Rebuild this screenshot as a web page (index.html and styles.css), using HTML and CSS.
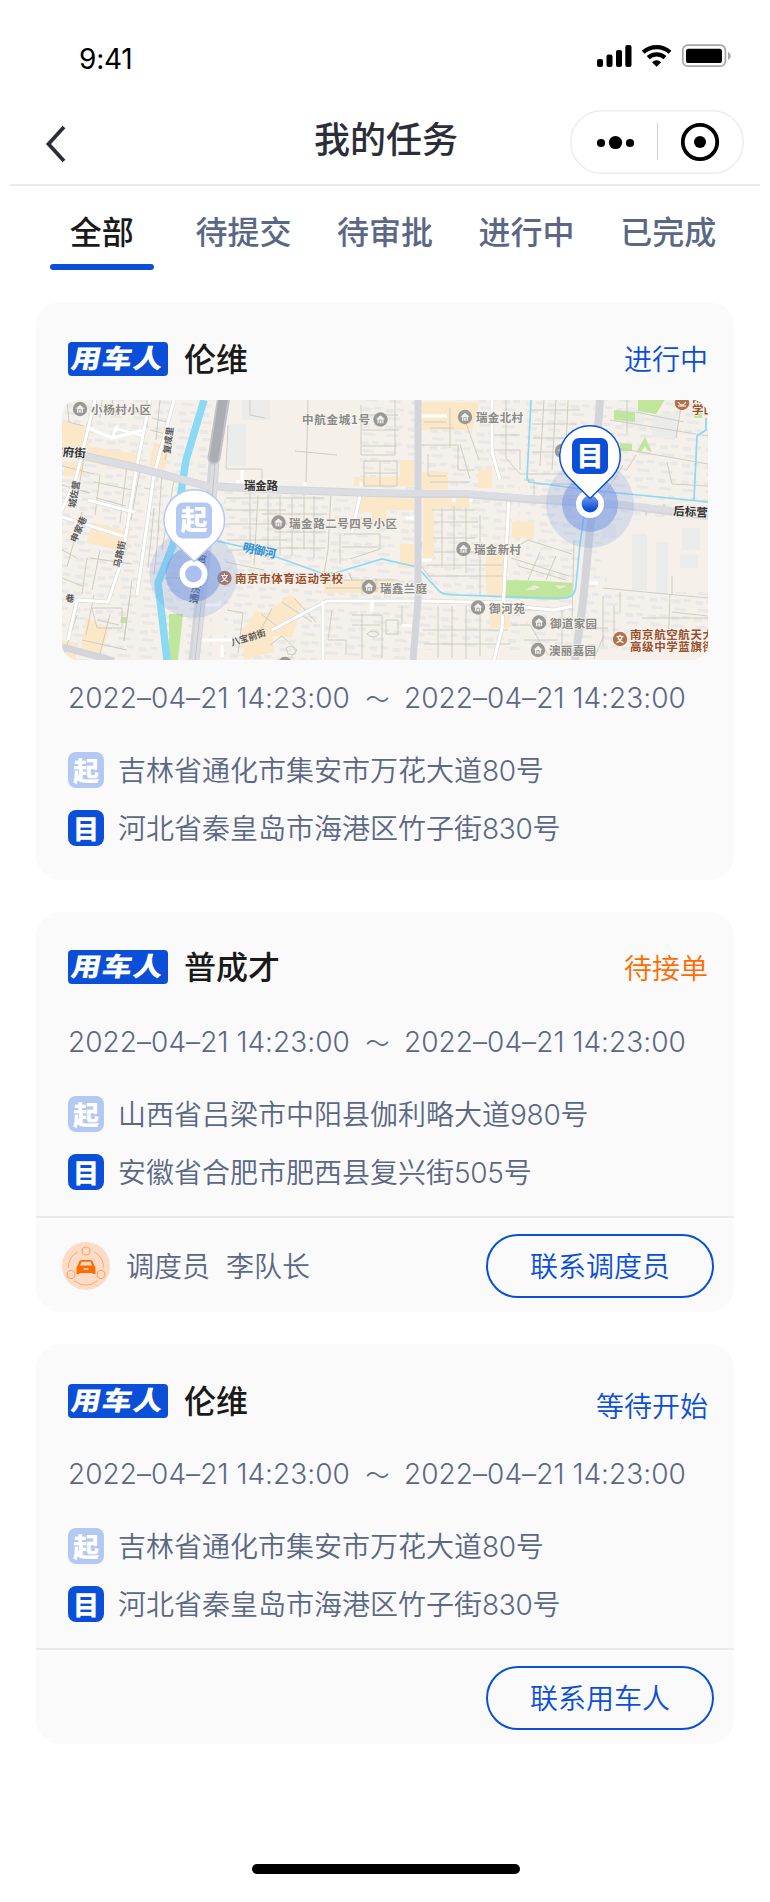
FILE: index.html
```html
<!DOCTYPE html>
<html lang="zh-CN">
<head>
<meta charset="utf-8">
<title>我的任务</title>
<link rel="stylesheet" href="styles.css">
</head>
<body>
<main class="screen">
  <header class="status-bar">
    <span class="clock">9:41</span>
    <svg class="status-icons" width="136" height="24" viewBox="0 0 136 24">
      <rect x="1" y="15" width="6" height="8" rx="2"/>
      <rect x="10.5" y="10.5" width="6" height="12.5" rx="2"/>
      <rect x="20" y="6" width="6" height="17" rx="2"/>
      <rect x="29.3" y="1" width="6.2" height="22" rx="2"/>
      <g fill="none" stroke="#000" stroke-width="4.2">
        <path d="M47.2 8.2a20 20 0 0 1 26.8 0"/>
        <path d="M52.2 13.6a12.3 12.3 0 0 1 16.8 0"/>
      </g>
      <path d="M60.6 22.8l-4.6-4.6a6.5 6.5 0 0 1 9.2 0z"/>
      <rect x="86.8" y="1.2" width="42.6" height="21" rx="5" fill="none" stroke="#a6a6a6" stroke-width="1.7"/>
      <rect x="90" y="4.8" width="36" height="14.3" rx="2.6"/>
      <path d="M132 8c3.6 1.2 3.6 6.600 0 7.800z" fill="#a6a6a6"/>
    </svg>
  </header>

  <nav class="nav-bar">
    <svg class="back" width="24" height="38" viewBox="0 0 24 38"><path d="M19 2L3.500 19 19 36" fill="none" stroke="#2b2d38" stroke-width="3.800"/></svg>
    <h1 class="title">我的任务</h1>
    <div class="capsule">
      <svg width="174" height="64" viewBox="0 0 174 64">
        <rect x=".7" y=".7" width="172.600" height="62.600" rx="31.300" fill="#fff" stroke="#ececec" stroke-width="1.400"/>
        <circle cx="31" cy="33" r="4.100"/><circle cx="45.500" cy="32.500" r="6.600"/><circle cx="60" cy="33" r="4.100"/>
        <path d="M87.500 13v37" stroke="#d5d5d5" stroke-width="1.200"/>
        <circle cx="130" cy="32" r="17.200" fill="none" stroke="#000" stroke-width="3.800"/><circle cx="130" cy="32" r="6"/>
      </svg>
    </div>
  </nav>

  <div class="tabs">
    <span class="tab active">全部</span>
    <span class="tab">待提交</span>
    <span class="tab">待审批</span>
    <span class="tab">进行中</span>
    <span class="tab">已完成</span>
  </div>

  <section class="cards">
    <article class="card trip">
      <div class="head">
        <span class="badge"><b>用车人</b></span><span class="name">伦维</span><span class="state">进行中</span>
      </div>
      <svg class="map" width="646" height="260" viewBox="0 0 646 260">
        <defs>
          <linearGradient id="dot" x1="0" y1="0" x2="0" y2="1"><stop offset=".1" stop-color="#7f9fe8"/><stop offset=".75" stop-color="#0b4fd9"/></linearGradient>
          <g id="home"><circle r="7.200" fill="#999894"/><path d="M-4.500-.3L0-4.300 4.500-.3H3v4h-6v-4z" fill="#f2f0ec"/><path d="M-1.300 3.700V.6h2.600v3.100" fill="none" stroke="#999894" stroke-width=".8"/></g>
          <g id="school"><circle r="7.200" fill="#b1714a"/><path d="M-3.500-2.500h7M0-4.500v2M-2.300-2.500Q-1 2 3.500 3.800M2.300-2.500Q1 2-3.500 3.800" fill="none" stroke="#fff" stroke-width="1.200"/></g>
          <pattern id="blocks" width="23" height="17" patternUnits="userSpaceOnUse" patternTransform="rotate(4)">
            <path d="M2 3h8v4h-8zM13 2h7v3h-7zM4 11h12v3H4z" fill="#e8e8e8"/>
          </pattern>
        </defs>
        <rect width="646" height="260" fill="#f5f1ea"/>
        <path fill="url(#blocks)" d="M0 0h150v260H0zM162 88h190v172H162zM298 0h160v250H298zM464 0h182v250H464z"/>
        <path fill="#f5f1ea" d="M195 0h103v84H195zM540 120h106v72H546z"/>
        <path fill="#ebebea" d="M166 24h18v42h-18zM180 0h28v20h-28zM540 124h14v14h-14zM570 134h15v56h-15zM594 142h12v52h-12zM620 128h18v22h-18zM618 154h18v14h-18zM560 8h22v18h-22zM590 14h26v24h-26z"/>
        <!-- commercial and park areas -->
        <g fill="#fbe8c9">
          <path d="M0 22l28 4-2 28L0 48zM26 46l50 8-3 18-48-10zM2 62h20v14H2zM30 122l38 10-3 20-40-9zM24 218l24 10-10 28H18zM92 42l14 6-3 22-16-4zM180 232l14-22 14 8 4 34-30 8zM0 240l14 4v16H0zM200 218l28-24 12 10-10 34-20-2zM262 180h70v13h-70zM338 60h14v26h-60v-9h46zM298 96h54v14h-28v12h-14v-10h-12zM338 144h14v24h-14zM360 2h58l-8 28h-50zM360 72h26v18h-26zM361 98h46v10h-35v50h-11zM416 70l14-2v20h-14zM450 122h22v16h-22zM424 150h18v45h-18zM428 206h20v22h-20z"/>
        </g>
        <g fill="#bfe69b"><path d="M443 180l38 1 30 2-2 14-13 3-54-2zM576-2h28l-10 16-18-3zM552 10l21 2v10l-21-2zM578 46l5-9 7 15-4-1-3-5-4 6-4-1zM558 43l12 1v7h-12zM107 214h14l-5 46h-9zM59 217h6v6h-6zM632 12h8v6h-8z"/></g>
        <path d="M464 190l8-5 6 2-6 3M493 185l12 1-8 3" fill="#ebe9df"/>
        <!-- lanes around the blocks -->
        <g fill="none" stroke="#cbc8be" stroke-width=".9">
          <path d="M5 0l2 22 14 4M22 58l-8 46M0 66l32 8M38 75l-5 40M0 85l28 8M32 82l38 8M34 98l30 8M65 65l-7 58M78 70l-9 50M82 88l12 2M92 108l-6 60M97 125l-5 50M100 72l-4 60M20 112l-15 55M28 158l42 6M25 158l-5 36M38 150l-8 40M0 178l20 8M0 150l15 8M32 195l-8 40M35 220l22 5M48 214l-10 40M68 196l-6 45M20 240l45 10M70 180l-8 60M30 208h30v20H35z"/>
          <path d="M40 0l-2 18M50 0l4 16M60 8l20 6M85 0v28M90 18l18 5M88 30l16 4M98 0l-4 40M112 80l-12 70M109 35l-6 25M166 25l-2 44h36v18M188 0v15l15 3M102 178h30M165 210l16 3-5 40M188 90v68M196 95l-4 70M206 95v65M164 98h38M164 110h60M163 124h62M165 140h60M168 150h45M164 162l38 8"/>
          <path d="M246 0l-2 84M233 51l42 4M299 5v50h34V0M300 15h36M300 30h37M300 46h35M302 61h33v25h-33zM302 73h33M318 61v25M218 95v60M230 98v58M242 95v55M252 96v62M202 98h60M200 114h65M212 132h52M215 148h48M269 92l-3 58-5 30M278 134v30M282 134h36v15l-30 10M280 147h35M265 180h25l-3-7 3 7h45M264 188h75M300 180v14M314 178v14M210 208l-14 28M220 202l30 20M232 198l22 24M215 226l-16-12M270 210l-4 30h18v15M290 215h30v43M300 214v45M290 225h28M305 234q6-6 12 0-6 6-12 0M324 220h12v14h-12zM340 206v18h14M208 245l12-9 15 14-8 10M224 248q6-4 9 2t-7 4z"/>
          <path d="M362 22h22M360 45h36v25h16M366 54v22h18M388 8v40M398 44l10 35M368 28h24M403 20l14 40M368 82h40M370 110h42M372 122h44M371 138h42M372 152h40M380 108v60M392 106v64M404 108v65M418 115v80M365 165h76M366 176h75M360 142l-4 20 14 18M376 206v52M390 206v52M404 206v53M418 206v50M361 230h85M362 244h86M430 35h28M432 50h26v20M444 0v58l14 16h60M468 10h50M470 24h44M471 38h44M470 52h40M482 0l-4 66M494 0l-4 70M506 0l-3 74M462 80h10v18h-10M474 84h44M478 96h40M452 148l14-8 44 14M449 158l58 18M456 166l48 14M478 152l-12 28M494 156l-10 24M512 140l-2 80"/>
          <path d="M548 20l98 16M565 0v34M574 12l48 10M620 0l-6 38M544 46l102 18M561 65l-10 16-10 16M574 55l-10 16M605 62l5 22 36 2M541 188l105 10M541 196v50M558 192v20M608 194l-2 54M610 212l36 4M580 218h66M546 228h-35M542 235l-10 24"/>
          <path d="M0 260l15-45M450 225h18l18 30M462 240h34M454 210h30M500 206v50M610 176v18M552 206v28M584 106v10M602 104v12M625 106v10"/>
        </g>
        <!-- water -->
        <g fill="none" stroke="#8adaf5">
          <path d="M142 0L124 60l-13 85-15 38 4 34 5 43" stroke-width="7.500"/>
          <path d="M155 141l40 9 64 23h14l47-14 35 8 22 24q3 4 20 4l86 3h22q9-3 9-13l4-41 4-28" stroke-width="1.700"/>
          <path d="M469 0l-4 78 2 4 60 8 119 12M644 18v12l-9 6-3 64" stroke-width="1.700"/>
        </g>
        <!-- streets -->
        <g fill="none" stroke="#dcdbd8" stroke-width="4.300" stroke-linejoin="round">
          <path d="M33 0L14 78 0 110M88 0L76 60 60 160 46 202 15 200 6 240M112 0L92 75 75 195M52 28l30 8M26 100l46 12M0 117l64 20M210 230l55-29h95l90 2M261 201v59M298 96l-8 36M430 0v52l8 28M447 98l-7 130-8 32M440 205l52 5 18-4"/>
        </g>
        <g fill="none" stroke="#fff" stroke-width="3" stroke-linejoin="round">
          <path d="M33 0L14 78 0 110M88 0L76 60 60 160 46 202 15 200 6 240M112 0L92 75 75 195M52 28l30 8M26 100l46 12M0 117l64 20M210 230l55-29h95l90 2M261 201v59M298 96l-8 36M430 0v52l8 28M447 98l-7 130-8 32M440 205l52 5 18-4"/>
          <path d="M26 28l24 10 5-12M50 38l32-8M180 70v12h-6M310 200v12M340 225h12M355 16h30M243 82v4M299 82v4M392 90v12M409 90v12M130 240h40M142 205h16v-4M160 245v12M352 118h-8M360 160h10M526 183h10"/>
        </g>
        <g fill="none" stroke="#d3d5db">
          <path d="M0 51l72 16 73 19 78 4 87 3 41 1h52l60 5 95 6 88 11" stroke-width="8"/>
          <path d="M152 62l-3 38-9 86-8 74" stroke-width="11"/>
          <path d="M356 0v200l-5 60" stroke-width="7"/>
          <path d="M538 0l-7 100-10 102-8 58" stroke-width="8"/>
          <path d="M0 247l52 14" stroke-width="7"/>
        </g>
        <path d="M0 51l72 16 73 19 78 4 87 3h93l60 5 95 6 88 11" fill="none" stroke="#dcdde3" stroke-width="6"/>
        <path d="M152 64l-3 36-9 86-8 74" fill="none" stroke="#c9c4b8" stroke-width="4"/>
        <path d="M151 62l-3 38-9 86-8 74M155 62l-3 38-9 86-8 74" fill="none" stroke="#dcdde3" stroke-width="3"/>
        <path d="M162-4l-10 62" stroke="#c1c3c8" stroke-width="13" stroke-linecap="round"/>
        <path d="M161 0l-9 58" stroke="#abadb2" stroke-width="9" stroke-linecap="round"/>
        <!-- labels -->
        <g class="place">
          <use href="#home" x="18" y="9"/><text x="29" y="14" textLength="60">小杨村小区</text>
          <text x="240" y="24" textLength="68">中航金城1号</text><use href="#home" x="318.500" y="19.500"/>
          <use href="#home" x="403" y="17"/><text x="414" y="21.500" textLength="47">瑞金北村</text>
          <use href="#home" x="216.500" y="122.500"/><text x="227" y="127.500" textLength="108">瑞金路二号四号小区</text>
          <use href="#home" x="401.500" y="149"/><text x="412" y="154" textLength="47">瑞金新村</text>
          <use href="#home" x="307" y="187"/><text x="318" y="192.500" textLength="47">瑞鑫兰庭</text>
          <use href="#home" x="416" y="207.500"/><text x="427" y="212.500" textLength="36">御河苑</text>
          <use href="#home" x="477" y="222.500"/><text x="488" y="228" textLength="47">御道家园</text>
          <use href="#home" x="476" y="250"/><text x="487" y="255" textLength="47">澳丽嘉园</text>
          <use href="#home" x="500" y="51"/><use href="#home" x="223" y="264"/>
        </g>
        <g class="place school">
          <use href="#school" x="162.500" y="178"/><text x="173" y="183" textLength="108">南京市体育运动学校</text>
          <use href="#school" x="558" y="239"/><text x="568" y="238.500" textLength="84">南京航空航天大</text><text x="568" y="250.500" textLength="84">高级中学蓝旗街</text>
          <circle cx="620" cy="3" r="7.200" fill="#b1714a"/><path d="M616 2q4 6 8 0M616 6h8" fill="none" stroke="#fff" stroke-width="1.200"/><text x="630" y="2">南京</text><text x="630" y="14">学山</text>
        </g>
        <g class="road">
          <text x="-11" y="56" transform="rotate(4 0 56)">宫府街</text>
          <text x="182" y="90" textLength="34">瑞金路</text>
          <text x="611" y="115" transform="rotate(3 611 115)">后标营路</text>
        </g>
        <g class="lane">
          <text transform="translate(108 54) rotate(-83)">复成里</text>
          <text transform="translate(13 108) rotate(-80)">城佐营</text>
          <text transform="translate(14 143) rotate(-66)">申家巷</text>
          <text transform="translate(58 168) rotate(-78)">马路街</text>
          <text transform="translate(3 201) rotate(8)">巷</text>
          <text transform="translate(170 246) rotate(-17)">八宝前街</text>
          <text transform="translate(135 204) rotate(-80)" class="lane-dark">通济门大街</text>
        </g>
        <text class="river" transform="translate(180 151) rotate(12)" textLength="34">明御河</text>
        <!-- start pin -->
        <circle cx="131.500" cy="174" r="44" fill="#7895de" opacity=".22"/><circle cx="131.500" cy="174" r="28" fill="#6f93e2" opacity=".5"/>
        <circle cx="131.500" cy="174" r="11.200" fill="#abc0ee" stroke="#fff" stroke-width="5.600"/>
        <path d="M132.300 161.500L110 140.500a30.300 30.300 0 1 1 44.600 0z" fill="#fff" stroke="#b3c8f3" stroke-width="1.500"/>
        <rect x="114" y="102.500" width="36" height="36" rx="7" fill="#b3c8f3"/><text class="pin-text" x="132" y="130">起</text>
        <!-- destination pin -->
        <circle cx="528" cy="104" r="44" fill="#7895de" opacity=".22"/><circle cx="528" cy="104" r="28" fill="#6f93e2" opacity=".5"/>
        <circle cx="528" cy="104" r="11.200" fill="url(#dot)" stroke="#fff" stroke-width="5.600"/>
        <path d="M528 98.500L505.700 76.500a30.300 30.300 0 1 1 44.600 0z" fill="#fff" stroke="#0b4fd9" stroke-width="1.500"/>
        <rect x="510" y="38" width="36" height="36" rx="7" fill="#0b4fd9"/><text class="pin-text" x="528" y="66">目</text>
      </svg>
      <div class="time"><span>2022–04–21 14:23:00</span><i>～</i><span>2022–04–21 14:23:00</span></div>
      <div class="stops">
        <div class="stop"><b class="mark from">起</b><span>吉林省通化市集安市万花大道<em>80</em>号</span></div>
        <div class="stop"><b class="mark">目</b><span>河北省秦皇岛市海港区竹子街<em>830</em>号</span></div>
      </div>
    </article>

    <article class="card pending">
      <div class="head">
        <span class="badge"><b>用车人</b></span><span class="name">普成才</span><span class="state waiting">待接单</span>
      </div>
      <div class="time"><span>2022–04–21 14:23:00</span><i>～</i><span>2022–04–21 14:23:00</span></div>
      <div class="stops">
        <div class="stop"><b class="mark from">起</b><span>山西省吕梁市中阳县伽利略大道<em>980</em>号</span></div>
        <div class="stop"><b class="mark">目</b><span>安徽省合肥市肥西县复兴街<em>505</em>号</span></div>
      </div>
      <div class="foot">
        <svg class="avatar" width="48" height="48" viewBox="0 0 48 48">
          <circle cx="24" cy="24" r="24" fill="#fddcc7"/>
          <g fill="none" stroke="#ffa366" stroke-width="1.200">
            <circle cx="24" cy="9" r="4"/><circle cx="9" cy="32.500" r="4"/><circle cx="39" cy="32.500" r="4"/>
            <path d="M15.500 10Q6.500 15 6.300 26M32.500 10Q41.500 15 41.700 26M12 38.500q12 9.500 24 0" stroke-width=".9"/>
          </g>
          <path d="M19.500 18h9q1.800 0 2.500 2l1.200 3.500q1.300.7 1.300 2.500v6h-3v-1h-13v1h-3v-6q0-1.800 1.300-2.500L17 20q.7-2 2.500-2z" fill="#ff6b00"/>
          <path d="M19.500 19.800h9l1.500 3.700H18z" fill="#fddcc7"/><path d="M21.500 27h5" stroke="#fddcc7" stroke-width="1.600"/>
        </svg>
        <span class="role">调度员</span><span class="person">李队长</span>
        <button class="contact">联系调度员</button>
      </div>
    </article>

    <article class="card upcoming">
      <div class="head">
        <span class="badge"><b>用车人</b></span><span class="name">伦维</span><span class="state">等待开始</span>
      </div>
      <div class="time"><span>2022–04–21 14:23:00</span><i>～</i><span>2022–04–21 14:23:00</span></div>
      <div class="stops">
        <div class="stop"><b class="mark from">起</b><span>吉林省通化市集安市万花大道<em>80</em>号</span></div>
        <div class="stop"><b class="mark">目</b><span>河北省秦皇岛市海港区竹子街<em>830</em>号</span></div>
      </div>
      <div class="foot"><button class="contact">联系用车人</button></div>
    </article>
  </section>
  <div class="home-indicator"></div>
</main>
</body>
</html>
```

FILE: styles.css
```css
* { box-sizing: border-box; }
body { margin: 0; background: #fff; font-family: Inter, "Noto Sans CJK SC", sans-serif; color: #5b6885; }
.screen { width: 750px; height: 1902px; margin: 0 auto; display: flex; flex-direction: column; overflow: hidden; }

.status-bar { height: 100px; flex: none; display: flex; justify-content: space-between; align-items: flex-start; padding: 44px 28px 0 69px; }
.clock { font-size: 28px; line-height: 30px; color: #000; letter-spacing: -.2px; }

.nav-bar { height: 86px; flex: none; display: grid; grid-template-columns: 174px 1fr 174px; align-items: start; padding: 10px 16px 0; border-bottom: 2px solid #ebebeb; }
.back { margin: 15px 0 0 19px; }
.title { margin: 0 0 0 2px; text-align: center; font-size: 36px; line-height: 54px; font-weight: 500; color: #2b2d38; font-family: "Noto Sans CJK SC", sans-serif; }
.capsule svg { display: block; }

.tabs { height: 84px; flex: none; display: grid; grid-template-columns: repeat(5, 141.600px); justify-content: center; font-family: "Noto Sans CJK SC", sans-serif; font-size: 32px; line-height: 48px; font-weight: 500; padding-top: 20px; }
.tab { display: flex; flex-direction: column; align-items: center; }
.active { color: #1a1a1a; }
.active::after { content: ""; width: 104px; height: 6px; margin-top: 10px; border-radius: 3px; background: #0b4fd9; }

.cards { display: flex; flex-direction: column; gap: 32px; padding: 32px 26px 0; }
.card { display: flex; flex-direction: column; background: #fafafa; border-radius: 24px; padding: 40px 0 0; }
.pending { padding-top: 38px; }
.head { height: 34px; display: flex; align-items: center; padding: 0 26px 0 32px; }
.badge { width: 100px; height: 34px; border-radius: 4px; background: #0b4fd9; color: #fff; display: flex; justify-content: center; }
.badge b { font: 900 26px/29px "Noto Sans CJK SC", sans-serif; letter-spacing: 1.500px; margin-right: -1.500px; transform: skewX(-11deg) scaleX(1.130); }
.name { margin: -4px 0 0 16px; font: 500 32px/48px "Noto Sans CJK SC", sans-serif; color: #1a1a1a; }
.state { margin: -3px 0 0 auto; font: 350 28px/42px "Noto Sans CJK SC", sans-serif; color: #0b4fd9; }
.waiting { margin-top: -1px; color: #ff6b00; }
.upcoming .state { position: relative; top: 5px; }
.map { display: block; margin: 24px 0 0 26px; border-radius: 16px; }

.time { height: 36px; display: flex; align-items: center; padding-left: 32px; margin-top: 20px; font-size: 28px; font-weight: 300; }
.time span { width: 283px; white-space: nowrap; letter-spacing: .05px; }
.time i { width: 53px; text-align: center; font: 350 24px/36px "Noto Sans CJK SC", sans-serif; }
.pending .time { margin-top: 40px; }
.upcoming .time { margin-top: 38px; }
.stops { display: flex; flex-direction: column; gap: 22px; padding: 36px 32px 34px; }
.pending .stops, .upcoming .stops { padding-bottom: 26px; }
.stop { height: 36px; display: flex; align-items: center; gap: 14px; font: 350 28px/36px "Noto Sans CJK SC", sans-serif; white-space: nowrap; }
.stop em { font-family: Inter, sans-serif; font-style: normal; font-weight: 300; letter-spacing: -.3px; }
.mark { width: 36px; height: 36px; border-radius: 8px; background: #0b4fd9; color: #fff; font: 900 26px/35px "Noto Sans CJK SC", sans-serif; text-align: center; }
.from { background: #b3c8f3; }

.foot { height: 96px; border-top: 2px solid #ebebeb; display: flex; align-items: center; padding: 2px 20px 0 26px; font: 350 28px/40px "Noto Sans CJK SC", sans-serif; }
.role { margin: -2px 0 0 16px; }
.person { margin: -2px 0 0 16px; }
.contact { width: 228px; height: 64px; margin-left: auto; padding: 0 0 2px; border: 2px solid #0b4fd9; border-radius: 32px; background: transparent; color: #0b4fd9; font: inherit; }

.home-indicator { width: 268px; height: 10px; margin: auto auto 28px 242px; flex: none; border-radius: 5px; background: #000; }

.map text { font-family: "Noto Sans CJK SC", sans-serif; }
.place text { font-size: 11.500px; font-weight: 700; fill: #8b8985; stroke: #f7f5f0; stroke-width: 1.500px; paint-order: stroke; }
.school text { fill: #9a4f2c; }
.road text { font-size: 11.500px; font-weight: 700; fill: #333; stroke: #f7f5f0; stroke-width: 1.500px; paint-order: stroke; }
.lane text { font-size: 9px; font-weight: 700; fill: #5a5a5a; }
.lane .lane-dark { font-size: 10px; fill: #333; }
.river { font-size: 11.500px; font-weight: 700; fill: #2f8fd6; }
.map .pin-text { font-size: 27px; font-weight: 900; fill: #fff; text-anchor: middle; }
```
